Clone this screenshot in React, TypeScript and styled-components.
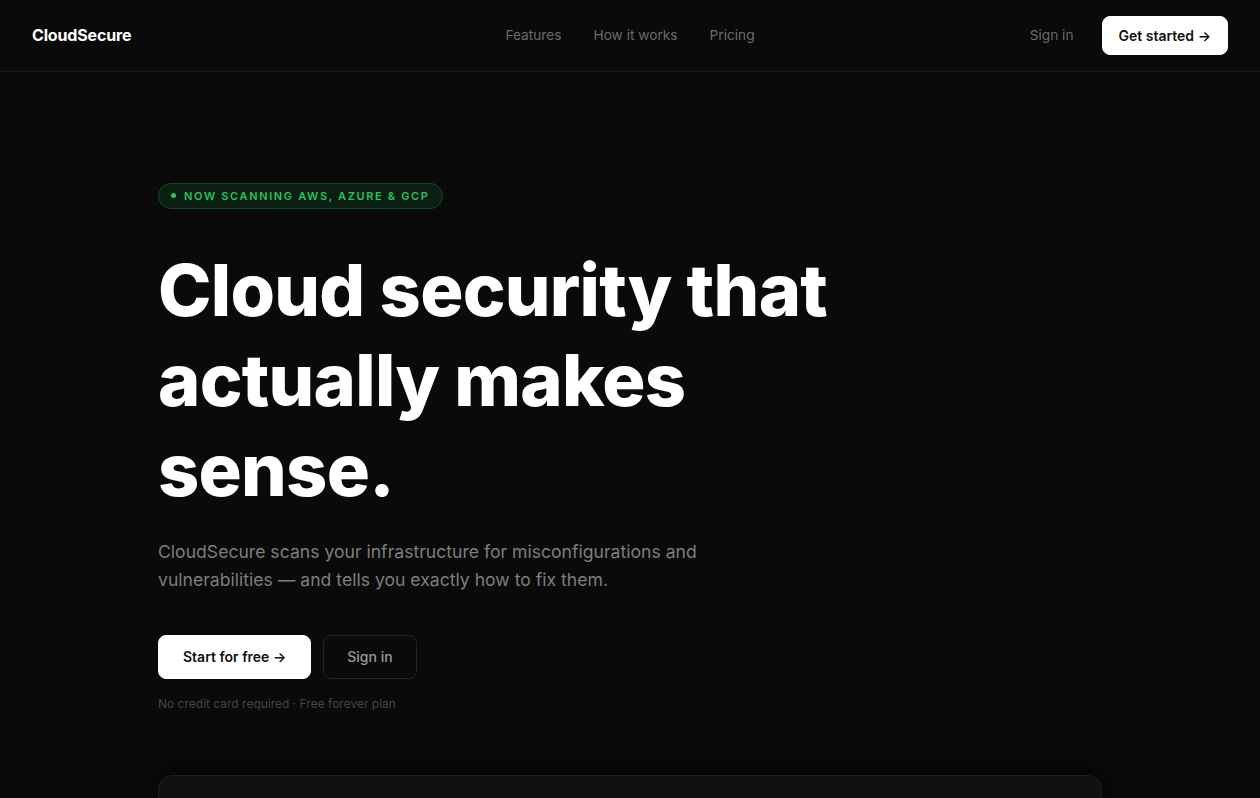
import styled, { createGlobalStyle } from 'styled-components';

const GlobalStyle = createGlobalStyle`
  html, body {
    margin: 0;
    padding: 0;
    background: #0a0a0a;
  }
  body {
    font-family: Inter, "Noto Sans", "Liberation Sans", sans-serif;
    color: #fafafa;
    -webkit-font-smoothing: antialiased;
  }
  * {
    box-sizing: border-box;
  }
`;

const Page = styled.div`
  min-height: 798px;
  background: #0a0a0a;
  overflow: hidden;
`;

const Nav = styled.header`
  height: 72px;
  padding: 0 32px 1px;
  display: grid;
  grid-template-columns: 1fr auto 1fr;
  align-items: center;
  border-bottom: 1px solid #1a1a1a;
`;

const Logo = styled.a`
  font-size: 16px;
  font-weight: 700;
  letter-spacing: -0.01em;
  color: #ffffff;
  text-decoration: none;
`;

const NavLinks = styled.nav`
  display: flex;
  gap: 32px;
`;

const NavLink = styled.a`
  font-size: 13.7px;
  color: #6a6a6a;
  text-decoration: none;
`;

const NavActions = styled.div`
  display: flex;
  justify-content: flex-end;
  align-items: center;
  gap: 28px;
`;

const Button = styled.a<{ $variant?: 'solid' | 'ghost'; $size?: 'sm' | 'md' }>`
  display: inline-flex;
  align-items: center;
  justify-content: center;
  height: ${p => (p.$size === 'sm' ? '39px' : '44px')};
  padding: 0 ${p => (p.$size === 'sm' ? '16px' : p.$variant === 'ghost' ? '23px' : '24px')};
  border-radius: 8px;
  font-size: 14px;
  text-decoration: none;
  background: ${p => (p.$variant === 'ghost' ? 'transparent' : '#ffffff')};
  color: ${p => (p.$variant === 'ghost' ? '#9a9a9a' : '#111111')};
  border: 1px solid ${p => (p.$variant === 'ghost' ? '#232323' : '#ffffff')};
  font-weight: ${p => (p.$variant === 'ghost' ? 500 : 600)};
`;

const Hero = styled.main`
  max-width: 944px;
  margin: 0 auto;
  padding-top: 110px;
`;

const Badge = styled.div`
  display: inline-flex;
  align-items: center;
  gap: 8px;
  height: 26px;
  padding: 0 12px;
  border-radius: 999px;
  border: 1px solid #124a26;
  background: #0a1f12;
  color: #22c55e;
  font-size: 11px;
  font-weight: 600;
  letter-spacing: 0.15em;
  text-transform: uppercase;
`;

const Dot = styled.span`
  width: 5px;
  height: 5px;
  border-radius: 50%;
  background: #22c55e;
`;

const Title = styled.h1`
  margin: 36px 0 0;
  max-width: 720px;
  font-size: 72px;
  line-height: 90px;
  font-weight: 800;
  letter-spacing: -0.01em;
  color: #ffffff;
`;

const Lead = styled.p`
  margin: 23px 0 0;
  max-width: 580px;
  font-size: 17.6px;
  line-height: 28px;
  color: #7e7e7e;
`;

const Actions = styled.div`
  display: flex;
  gap: 12px;
  margin-top: 41px;
`;

const Note = styled.p`
  margin: 17px 0 0;
  font-size: 12px;
  color: #454545;
`;

const Preview = styled.div`
  margin-top: 64px;
  height: 200px;
  border-radius: 14px;
  border: 1px solid #1e1e1e;
  background: #111111;
  box-shadow: 0 -4px 24px rgba(0, 0, 0, 0.6);
`;

export default function App() {
  return (
    <Page>
      <GlobalStyle />
      <Nav>
        <Logo href="#">CloudSecure</Logo>
        <NavLinks>
          <NavLink href="#">Features</NavLink>
          <NavLink href="#">How it works</NavLink>
          <NavLink href="#">Pricing</NavLink>
        </NavLinks>
        <NavActions>
          <NavLink href="#">Sign in</NavLink>
          <Button href="#" $size="sm">Get started →</Button>
        </NavActions>
      </Nav>
      <Hero>
        <Badge>
          <Dot />
          Now scanning AWS, Azure &amp; GCP
        </Badge>
        <Title>Cloud security that actually makes sense.</Title>
        <Lead>
          CloudSecure scans your infrastructure for misconfigurations and vulnerabilities — and tells
          you exactly how to fix them.
        </Lead>
        <Actions>
          <Button href="#">Start for free →</Button>
          <Button href="#" $variant="ghost">Sign in</Button>
        </Actions>
        <Note>No credit card required · Free forever plan</Note>
        <Preview />
      </Hero>
    </Page>
  );
}
